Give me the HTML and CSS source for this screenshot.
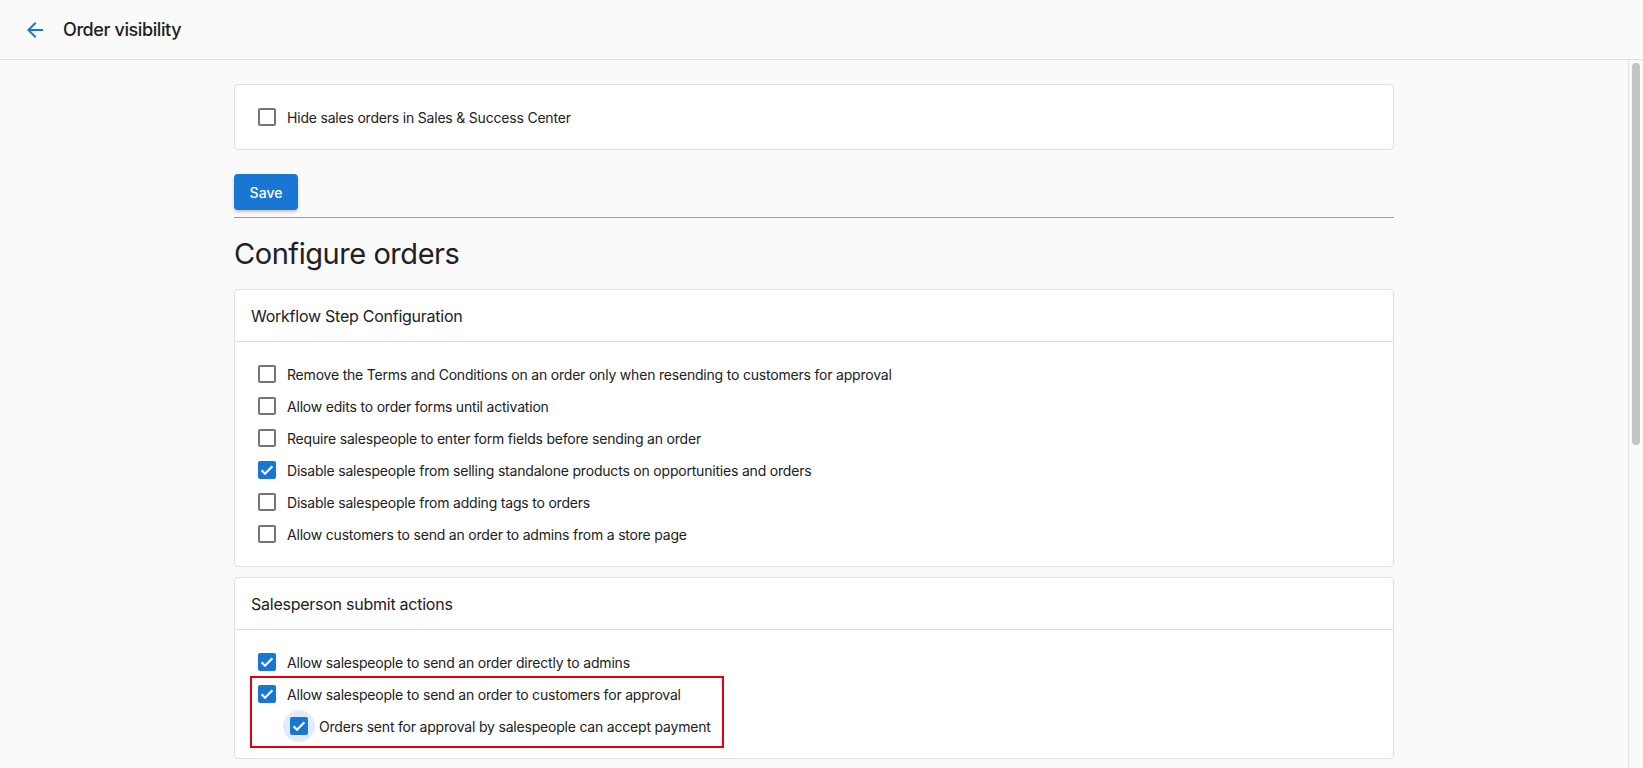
FILE: index.html
```html
<!DOCTYPE html>
<html lang="en">
<head>
<meta charset="utf-8">
<title>Order visibility</title>
<link rel="stylesheet" href="styles.css">
</head>
<body>
<header class="topbar">
  <button class="back" aria-label="Back">
    <svg viewBox="0 0 24 24" width="24" height="24"><path d="M20 11H7.83l5.59-5.59L12 4l-8 8 8 8 1.41-1.41L7.83 13H20v-2z" fill="#1976d2"/></svg>
  </button>
  <h1 class="title">Order visibility</h1>
</header>
<div class="main">
  <main class="scroll-area">
    <div class="content">
      <section class="card">
        <div class="card-body">
          <label class="row"><span class="box"></span><span>Hide sales orders in Sales &amp; Success Center</span></label>
        </div>
      </section>
      <button class="save">Save</button>
      <hr class="divider">
      <h2 class="heading">Configure orders</h2>
      <section class="card">
        <div class="card-header">Workflow Step Configuration</div>
        <div class="card-body">
          <label class="row"><span class="box"></span><span>Remove the Terms and Conditions on an order only when resending to customers for approval</span></label>
          <label class="row"><span class="box"></span><span>Allow edits to order forms until activation</span></label>
          <label class="row"><span class="box"></span><span>Require salespeople to enter form fields before sending an order</span></label>
          <label class="row"><span class="box checked"><svg viewBox="0 0 18 18"><path d="M3.6 9.3l3.4 3.4 7.4-7.4" fill="none" stroke="#fff" stroke-width="2.2"/></svg></span><span>Disable salespeople from selling standalone products on opportunities and orders</span></label>
          <label class="row"><span class="box"></span><span>Disable salespeople from adding tags to orders</span></label>
          <label class="row"><span class="box"></span><span>Allow customers to send an order to admins from a store page</span></label>
        </div>
      </section>
      <section class="card">
        <div class="card-header">Salesperson submit actions</div>
        <div class="card-body">
          <label class="row"><span class="box checked"><svg viewBox="0 0 18 18"><path d="M3.6 9.3l3.4 3.4 7.4-7.4" fill="none" stroke="#fff" stroke-width="2.2"/></svg></span><span>Allow salespeople to send an order directly to admins</span></label>
          <div class="highlight">
            <label class="row"><span class="box checked"><svg viewBox="0 0 18 18"><path d="M3.6 9.3l3.4 3.4 7.4-7.4" fill="none" stroke="#fff" stroke-width="2.2"/></svg></span><span>Allow salespeople to send an order to customers for approval</span></label>
            <label class="row nested"><span class="box checked focused"><svg viewBox="0 0 18 18"><path d="M3.6 9.3l3.4 3.4 7.4-7.4" fill="none" stroke="#fff" stroke-width="2.2"/></svg></span><span>Orders sent for approval by salespeople can accept payment</span></label>
          </div>
        </div>
      </section>
    </div>
  </main>
  <div class="scrollbar"><div class="thumb"></div></div>
</div>
</body>
</html>
```
FILE: styles.css
```css
* { box-sizing: border-box; }
html, body { margin: 0; height: 100%; }
body {
  display: flex;
  flex-direction: column;
  background: #fafafa;
  color: #212121;
  font-family: Inter, "Noto Sans", sans-serif;
  font-size: 14px;
  overflow: hidden;
}
.topbar {
  flex: none;
  height: 60px;
  display: flex;
  align-items: center;
  border-bottom: 1px solid #dedede;
  padding-left: 23px;
  background: #fafafa;
}
.back {
  border: 0;
  background: none;
  padding: 0;
  width: 24px;
  height: 24px;
  display: flex;
  margin-right: 16px;
}
.title {
  margin: 0;
  font-size: 18px;
  font-weight: 500;
  letter-spacing: -0.4px;
  color: #212121;
}
.main {
  flex: 1;
  min-height: 0;
  display: flex;
}
.scroll-area {
  flex: 1;
  overflow: hidden;
}
.scrollbar {
  flex: none;
  width: 15px;
  border-left: 1px solid #e4e4e4;
  background: #fafafa;
  padding: 3px 3px 0 3px;
}
.thumb {
  height: 382px;
  border-radius: 4px;
  background: #c4c4c4;
}
.content {
  max-width: 1160px;
  margin: 0 auto;
  padding-top: 24px;
}
.card {
  background: #fff;
  border: 1px solid #e0e0e0;
  border-radius: 4px;
  letter-spacing: -0.2px;
}
.card + .card { margin-top: 10px; }
.card-header {
  height: 52px;
  display: flex;
  align-items: center;
  padding: 0 16px;
  font-size: 16px;
  letter-spacing: -0.25px;
  border-bottom: 1px solid #e0e0e0;
}
.card-body {
  padding: 16px 23px;
}
.row {
  display: flex;
  align-items: center;
  height: 32px;
  gap: 11px;
  white-space: nowrap;
}
.box {
  position: relative;
  flex: none;
  width: 18px;
  height: 18px;
  border: 2px solid #757575;
  border-radius: 2px;
  display: flex;
  align-items: center;
  justify-content: center;
}
.box.checked {
  background: #1976d2;
  border-color: #1976d2;
}
.box svg { width: 18px; height: 18px; flex: none; }
.box.focused::before {
  content: "";
  position: absolute;
  left: 50%;
  top: 50%;
  width: 32px;
  height: 32px;
  margin: -16px 0 0 -16px;
  border-radius: 50%;
  background: rgba(25, 118, 210, 0.14);
  z-index: -1;
}
.box.checked.focused { z-index: 0; }
.nested { padding-left: 32px; }
.highlight {
  position: relative;
  width: fit-content;
}
.highlight::after {
  content: "";
  position: absolute;
  top: -2px;
  left: -8px;
  right: -13px;
  bottom: -6px;
  border: 2px solid #e0000d;
  pointer-events: none;
}
.save {
  display: block;
  margin-top: 24px;
  width: 64px;
  height: 36px;
  border: 0;
  border-radius: 4px;
  background: #1976d2;
  color: #fff;
  font-family: inherit;
  font-size: 14px;
  font-weight: 500;
  box-shadow: 0 2px 3px rgba(0,0,0,0.22);
}
.divider {
  margin: 7px 0 0;
  border: 0;
  border-top: 1px solid #9e9e9e;
}
.heading {
  margin: 18px 0 17px;
  font-size: 29px;
  font-weight: 400;
  letter-spacing: -0.45px;
  line-height: 36px;
}
```
